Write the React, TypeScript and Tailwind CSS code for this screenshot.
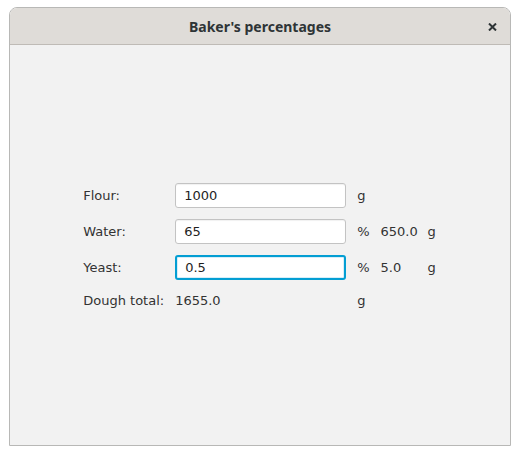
import React from "react";

const font = { fontFamily: '"DejaVu Sans", sans-serif' };

function Field({ value, focused }: { value: string; focused?: boolean }) {
  return (
    <div
      className={
        "h-[25px] w-[171px] rounded-[3px] bg-white pl-[8px] flex items-center text-[13px] text-[#1e1e1e] " +
        (focused
          ? "border-2 border-[#039ed3] pl-[7px] shadow-[inset_0_0_0_1px_#d7eef8]"
          : "border border-[#c3c3c3] shadow-[inset_0_1px_1px_rgba(0,0,0,0.06)]")
      }
    >
      {value}
    </div>
  );
}

export default function App() {
  return (
    <div className="w-[520px] h-[455px] bg-white relative" style={font}>
      <div className="absolute left-[9px] top-[7px] w-[502px] h-[439px] flex flex-col border border-[#b8b8b6] rounded-t-[8px] overflow-hidden">
        <div className="h-[37px] shrink-0 bg-[#dfdcd8] border-b border-[#bfbbb6] flex items-center justify-center relative">
          <span className="text-[14px] font-bold text-[#2e3436]" style={{ fontFamily: '"Noto Sans", sans-serif' }}>
            Baker's percentages
          </span>
          <svg className="absolute left-[478px] top-[15px]" width="9" height="8" viewBox="0 0 9 8">
            <path d="M1 0.5 L8 7.5 M8 0.5 L1 7.5" stroke="#2e3436" strokeWidth="2" />
          </svg>
        </div>
        <div className="flex-1 bg-[#f2f2f2] flex items-center justify-center pt-[4px] text-[13px] text-[#333333]">
          <div className="grid grid-cols-[auto_auto_auto_auto_auto] gap-x-[11px] gap-y-[11px] items-center -translate-x-[1px]">
            <span className="mr-[-1px] pl-[1px]">Flour:</span>
            <Field value="1000" />
            <span>g</span>
            <span></span>
            <span></span>

            <span className="pl-[1px]">Water:</span>
            <Field value="65" />
            <span>%</span>
            <span className="w-[36px]">650.0</span>
            <span>g</span>

            <span className="pl-[1px]">Yeast:</span>
            <Field value="0.5" focused />
            <span>%</span>
            <span>5.0</span>
            <span>g</span>

            <span className="pl-[1px]">Dough total:</span>
            <span>1655.0</span>
            <span>g</span>
            <span></span>
            <span></span>
          </div>
        </div>
      </div>
    </div>
  );
}
